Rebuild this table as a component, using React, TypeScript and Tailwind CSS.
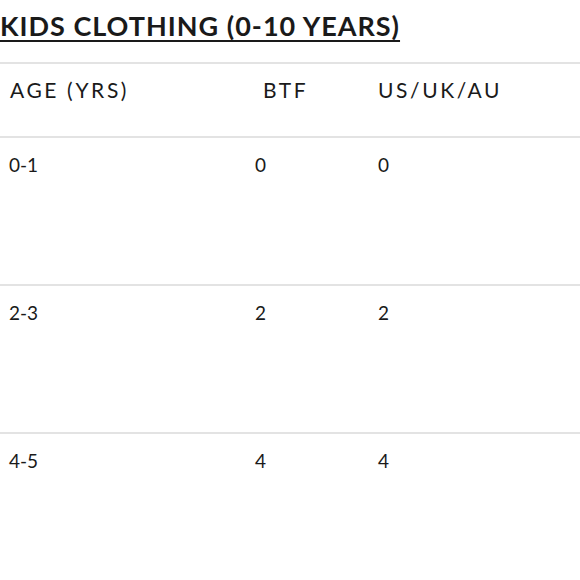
import React from "react";

const rows = [
  ["0-1", "0", "0"],
  ["2-3", "2", "2"],
  ["4-5", "4", "4"],
];

export default function App() {
  return (
    <div className="w-[580px] h-[580px] overflow-hidden bg-white text-[#1a1a1a]" style={{ fontFamily: "Lato, 'Liberation Sans', sans-serif" }}>
      <div className="h-[62px] pt-[10px]">
        <h1 className="text-[27px] leading-[32px] font-bold tracking-[1px] underline underline-offset-[4px] decoration-[2px] whitespace-nowrap">
          KIDS CLOTHING (0-10 YEARS)
        </h1>
      </div>
      <div className="border-t-2 border-[#e3e3e3]">
        <div className="flex h-[74px] pt-[13px] text-[21px] leading-[26px] tracking-[2.6px] border-b-2 border-[#e3e3e3]">
          <div className="w-[263px] pl-[10px]">AGE (YRS)</div>
          <div className="w-[115px]">BTF</div>
          <div className="flex-1">US/UK/AU</div>
        </div>
        {rows.map((r, i) => (
          <div key={i} className="flex h-[148px] pt-[15px] text-[19px] leading-[24px] border-b-2 border-[#e3e3e3]">
            <div className="w-[255px] pl-[9px]">{r[0]}</div>
            <div className="w-[123px]">{r[1]}</div>
            <div className="flex-1">{r[2]}</div>
          </div>
        ))}
      </div>
    </div>
  );
}
